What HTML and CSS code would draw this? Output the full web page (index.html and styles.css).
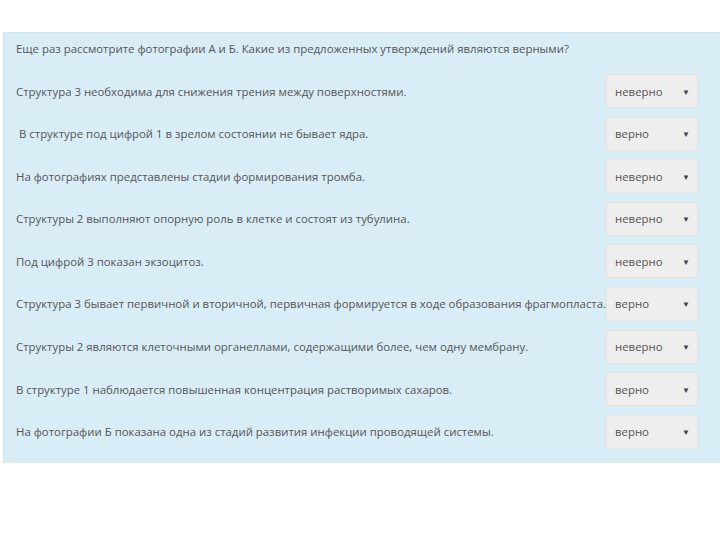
FILE: index.html
```
<!DOCTYPE html>
<html lang="ru">
    <head>
        <title>Задание</title>
        <meta charset="utf-8" />
        <meta name="viewport" content="width=device-width, initial-scale=1.0" />
        <link rel="stylesheet" href="styles.css">
    </head>
    <body>
        <div class="panel">
            <p class="question">Еще раз рассмотрите фотографии А и Б. Какие из предложенных утверждений являются верными?</p>
            <div class="row">
                <span class="text">Структура 3 необходима для снижения трения между поверхностями.</span>
                <div class="select"><span>неверно</span><span class="arrow">&#9660;</span></div>
            </div>
            <div class="row">
                <span class="text indent">В структуре под цифрой 1 в зрелом состоянии не бывает ядра.</span>
                <div class="select"><span>верно</span><span class="arrow">&#9660;</span></div>
            </div>
            <div class="row">
                <span class="text">На фотографиях представлены стадии формирования тромба.</span>
                <div class="select"><span>неверно</span><span class="arrow">&#9660;</span></div>
            </div>
            <div class="row">
                <span class="text">Структуры 2 выполняют опорную роль в клетке и состоят из тубулина.</span>
                <div class="select"><span>неверно</span><span class="arrow">&#9660;</span></div>
            </div>
            <div class="row">
                <span class="text">Под цифрой 3 показан экзоцитоз.</span>
                <div class="select"><span>неверно</span><span class="arrow">&#9660;</span></div>
            </div>
            <div class="row">
                <span class="text">Структура 3 бывает первичной и вторичной, первичная формируется в ходе образования фрагмопласта.</span>
                <div class="select"><span>верно</span><span class="arrow">&#9660;</span></div>
            </div>
            <div class="row">
                <span class="text">Структуры 2 являются клеточными органеллами, содержащими более, чем одну мембрану.</span>
                <div class="select"><span>неверно</span><span class="arrow">&#9660;</span></div>
            </div>
            <div class="row">
                <span class="text">В структуре 1 наблюдается повышенная концентрация растворимых сахаров.</span>
                <div class="select"><span>верно</span><span class="arrow">&#9660;</span></div>
            </div>
            <div class="row">
                <span class="text">На фотографии Б показана одна из стадий развития инфекции проводящей системы.</span>
                <div class="select"><span>верно</span><span class="arrow">&#9660;</span></div>
            </div>
        </div>
    </body>
</html>
```

FILE: styles.css
```
html, body {
    margin: 0px;
    padding: 0px;
    background: white;
    font-family: "Open Sans", "Liberation Sans", sans-serif;
    font-size: 11.4px;
    color: #555555;
}
.panel {
    margin: 32px 0px 0px 3px;
    padding: 8px 22px 14px 12px;
    background: #d9edf7;
    border-top: 1px solid #cfe6f2;
    border-left: 1px solid #cfe6f2;
}
.question {
    margin: 0px 0px 18px;
    line-height: 15px;
}
.row {
    display: flex;
    align-items: center;
    height: 34px;
    margin-bottom: 8.6px;
}
.row:last-child {
    margin-bottom: 0px;
}
.text {
    flex: 1;
    white-space: nowrap;
}
.indent {
    padding-left: 3px;
}
.select {
    display: flex;
    align-items: center;
    justify-content: space-between;
    box-sizing: border-box;
    width: 92px;
    height: 34px;
    padding: 0px 7px 0px 8px;
    background: #eeeeee;
    border: 1px solid #e4e4e4;
    color: #555555;
}
.arrow {
    font-size: 8px;
    color: #444444;
}
```
